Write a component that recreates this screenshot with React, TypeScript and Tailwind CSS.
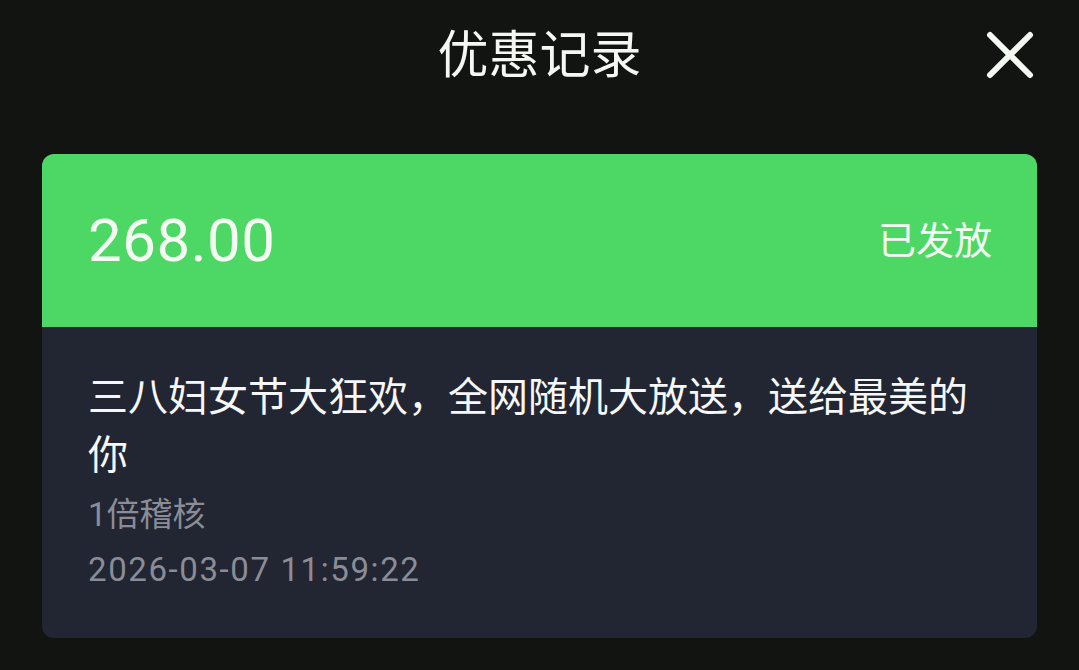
export default function App() {
  const font = { fontFamily: '"Roboto", "Noto Sans CJK SC", sans-serif' };
  return (
    <div className="w-full h-[670px] bg-[#121412] overflow-hidden" style={font}>
      <div className="relative h-[110px] flex items-center justify-center">
        <div className="text-[51px] leading-none text-[#f4f8f2]">优惠记录</div>
        <div className="absolute right-[44px] top-[30px] w-[50px] h-[50px]">
          <svg viewBox="0 0 50 50" width="50" height="50">
            <path d="M5 5 L45 45 M45 5 L5 45" stroke="#f4f8f2" strokeWidth="6" strokeLinecap="round" />
          </svg>
        </div>
      </div>
      <div className="mx-[42px] mt-[44px] rounded-[12px] overflow-hidden">
        <div className="h-[173px] bg-[#4dd865] flex items-center justify-between pl-[46px] pr-[45px]">
          <div className="text-[60px] leading-none text-[#f4fbf2] tracking-[0.5px]">268.00</div>
          <div className="text-[38px] leading-none text-[#f4fbf2]">已发放</div>
        </div>
        <div className="h-[311px] bg-[#222532] pl-[46px] pr-[40px] pt-[42px]">
          <div className="text-[40px] leading-[58px] text-[#f6f7f8]">三八妇女节大狂欢，全网随机大放送，送给最美的你</div>
          <div className="mt-[2px] text-[33px] leading-[55px] text-[#8a8d97]">1倍稽核</div>
          <div className="text-[33px] leading-[55px] text-[#8a8d97] tracking-[1.6px]">2026-03-07 11:59:22</div>
        </div>
      </div>
    </div>
  );
}
